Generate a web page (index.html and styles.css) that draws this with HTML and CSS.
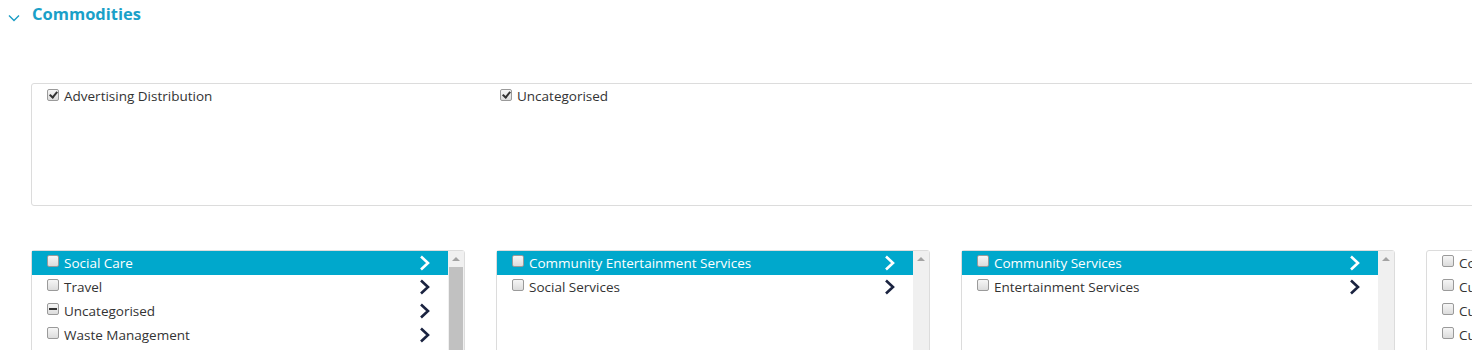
FILE: index.html
```html
<!DOCTYPE html>
<html>
<head>
<meta charset="utf-8">
<link rel="stylesheet" href="styles.css">
</head>
<body>
<div class="section-head">
  <svg class="caret" width="12" height="8" viewBox="0 0 12 8"><polyline points="1,1.5 6,6.5 11,1.5" fill="none" stroke="#1a9cc4" stroke-width="1.4"/></svg>
  <h2 class="title">Commodities</h2>
</div>

<div class="selected-box">
  <label class="sel-item"><span class="cb checked"></span>Advertising Distribution</label>
  <label class="sel-item"><span class="cb checked"></span>Uncategorised</label>
</div>

<div class="panels">
  <div class="panel">
    <ul class="list">
      <li class="row active"><span class="cb"></span><span class="lbl">Social Care</span><svg class="arr" viewBox="0 0 12 16"><polyline points="2,1.5 9,8 2,14.5" fill="none" stroke="currentColor" stroke-width="2.6"/></svg></li>
      <li class="row"><span class="cb"></span><span class="lbl">Travel</span><svg class="arr" viewBox="0 0 12 16"><polyline points="2,1.5 9,8 2,14.5" fill="none" stroke="currentColor" stroke-width="2.6"/></svg></li>
      <li class="row"><span class="cb partial"></span><span class="lbl">Uncategorised</span><svg class="arr" viewBox="0 0 12 16"><polyline points="2,1.5 9,8 2,14.5" fill="none" stroke="currentColor" stroke-width="2.6"/></svg></li>
      <li class="row"><span class="cb"></span><span class="lbl">Waste Management</span><svg class="arr" viewBox="0 0 12 16"><polyline points="2,1.5 9,8 2,14.5" fill="none" stroke="currentColor" stroke-width="2.6"/></svg></li>
    </ul>
    <div class="sbar"><span class="sup"></span><span class="thumb"></span></div>
  </div>
  <div class="panel">
    <ul class="list">
      <li class="row active"><span class="cb"></span><span class="lbl">Community Entertainment Services</span><svg class="arr" viewBox="0 0 12 16"><polyline points="2,1.5 9,8 2,14.5" fill="none" stroke="currentColor" stroke-width="2.6"/></svg></li>
      <li class="row"><span class="cb"></span><span class="lbl">Social Services</span><svg class="arr" viewBox="0 0 12 16"><polyline points="2,1.5 9,8 2,14.5" fill="none" stroke="currentColor" stroke-width="2.6"/></svg></li>
    </ul>
    <div class="sbar"><span class="sup"></span></div>
  </div>
  <div class="panel">
    <ul class="list">
      <li class="row active"><span class="cb"></span><span class="lbl">Community Services</span><svg class="arr" viewBox="0 0 12 16"><polyline points="2,1.5 9,8 2,14.5" fill="none" stroke="currentColor" stroke-width="2.6"/></svg></li>
      <li class="row"><span class="cb"></span><span class="lbl">Entertainment Services</span><svg class="arr" viewBox="0 0 12 16"><polyline points="2,1.5 9,8 2,14.5" fill="none" stroke="currentColor" stroke-width="2.6"/></svg></li>
    </ul>
    <div class="sbar"><span class="sup"></span></div>
  </div>
  <div class="panel">
    <ul class="list">
      <li class="row"><span class="cb"></span><span class="lbl">Community Care</span></li>
      <li class="row"><span class="cb"></span><span class="lbl">Cultural Services</span></li>
      <li class="row"><span class="cb"></span><span class="lbl">Culture and Heritage</span></li>
      <li class="row"><span class="cb"></span><span class="lbl">Customer Services</span></li>
    </ul>
  </div>
</div>
</body>
</html>
```

FILE: styles.css
```css
html, body {
  margin: 0;
  padding: 0;
  overflow: hidden;
  background: #fff;
}
body {
  font-family: "Open Sans", "Liberation Sans", sans-serif;
  font-size: 13.5px;
  color: #333;
  width: 1472px;
  height: 350px;
}
.section-head {
  display: flex;
  align-items: center;
  gap: 12px;
  padding: 0 0 0 8px;
  height: 27px;
}
.caret {
  margin-top: 9px;
}
.title {
  margin: 0;
  font-size: 16.5px;
  font-weight: 700;
  color: #1aa0c8;
}
.selected-box {
  margin: 56px 0 0 31px;
  width: 1460px;
  height: 123px;
  border: 1px solid #dcdcdc;
  border-radius: 3px;
  display: flex;
  align-items: flex-start;
  padding: 3px 0 0 15px;
  box-sizing: border-box;
}
.sel-item {
  display: flex;
  align-items: center;
  gap: 5px;
  width: 453px;
  height: 18px;
}
.cb {
  display: inline-block;
  width: 12px;
  height: 12px;
  box-sizing: border-box;
  border: 1px solid #9a9a9a;
  border-radius: 2px;
  background: linear-gradient(#f6f6f6, #dcdcdc);
  position: relative;
  flex: none;
}
.sel-item .cb {
  margin-top: -2px;
}
.cb.checked::after {
  content: "";
  position: absolute;
  left: 3px;
  top: 0px;
  width: 3px;
  height: 6px;
  border: solid #333;
  border-width: 0 2px 2px 0;
  transform: rotate(40deg);
}
.cb.partial::after {
  content: "";
  position: absolute;
  left: 1px;
  right: 1px;
  top: 4px;
  height: 2px;
  background: #333;
}
.panels {
  display: flex;
  gap: 31px;
  margin: 44px 0 0 31px;
}
.panel {
  flex: none;
  width: 434px;
  height: 150px;
  border: 1px solid #dcdcdc;
  border-radius: 3px;
  box-sizing: border-box;
  display: flex;
}
.list {
  list-style: none;
  margin: 0;
  padding: 0;
  flex: 1;
}
.row {
  display: flex;
  align-items: center;
  height: 24px;
  padding: 0 0 0 15px;
  gap: 5px;
  color: #333;
}
.row .cb {
  margin-top: -4px;
}
.row.active {
  background: #00a8cc;
  color: #fff;
}
.lbl {
  flex: 1;
}
.arr {
  width: 12px;
  height: 16px;
  margin-right: 17px;
  color: #1a2340;
}
.row.active .arr {
  color: #fff;
}
.sbar {
  width: 16px;
  background: #f0f0f0;
  display: flex;
  flex-direction: column;
  align-items: center;
}
.sup {
  margin-top: 6px;
  width: 0;
  height: 0;
  border-left: 4px solid transparent;
  border-right: 4px solid transparent;
  border-bottom: 4px solid #a3a3a3;
}
.thumb {
  margin-top: 6px;
  width: 14px;
  flex: 1;
  background: #c1c1c1;
}
```
